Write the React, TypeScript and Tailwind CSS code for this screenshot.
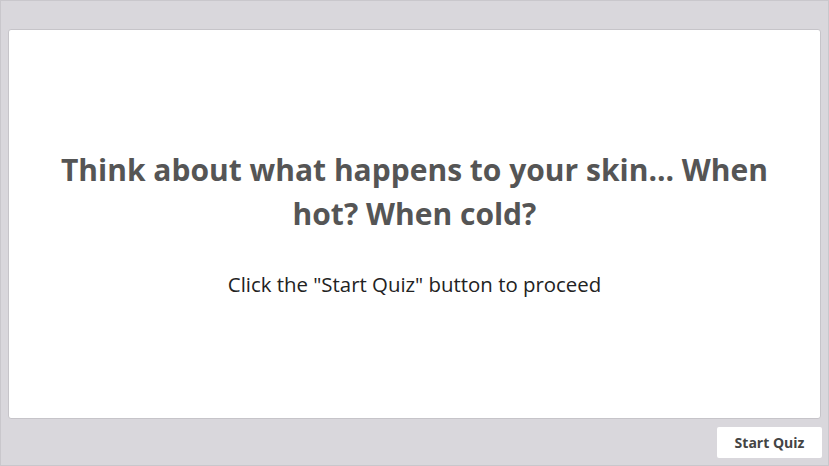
import React from 'react';

export default function App() {
  return (
    <div
      className="w-[829px] h-[466px] bg-[#d9d7dc] border border-[#c9c7cc] flex flex-col overflow-hidden"
      style={{ fontFamily: '"Open Sans", sans-serif' }}
    >
      {/* Slide area */}
      <div className="h-[28px] shrink-0" />
      <div className="mx-[7px] h-[390px] bg-white border border-[#c6c4c9] rounded-[3px] flex flex-col items-center pt-[118px] px-10">
        <h1 className="text-[30px] leading-[44px] font-bold text-[#555555] text-center">
          Think about what happens to your skin... When hot? When cold?
        </h1>
        <p className="text-[20.4px] leading-[28px] text-[#222222] mt-[34px]">
          Click the "Start Quiz" button to proceed
        </p>
      </div>

      {/* Footer */}
      <div className="flex justify-end pr-[6px] pt-[8px]">
        <button className="w-[105px] h-[31px] bg-white rounded-[2px] text-[14px] font-bold text-[#444444]">
          Start Quiz
        </button>
      </div>
    </div>
  );
}
